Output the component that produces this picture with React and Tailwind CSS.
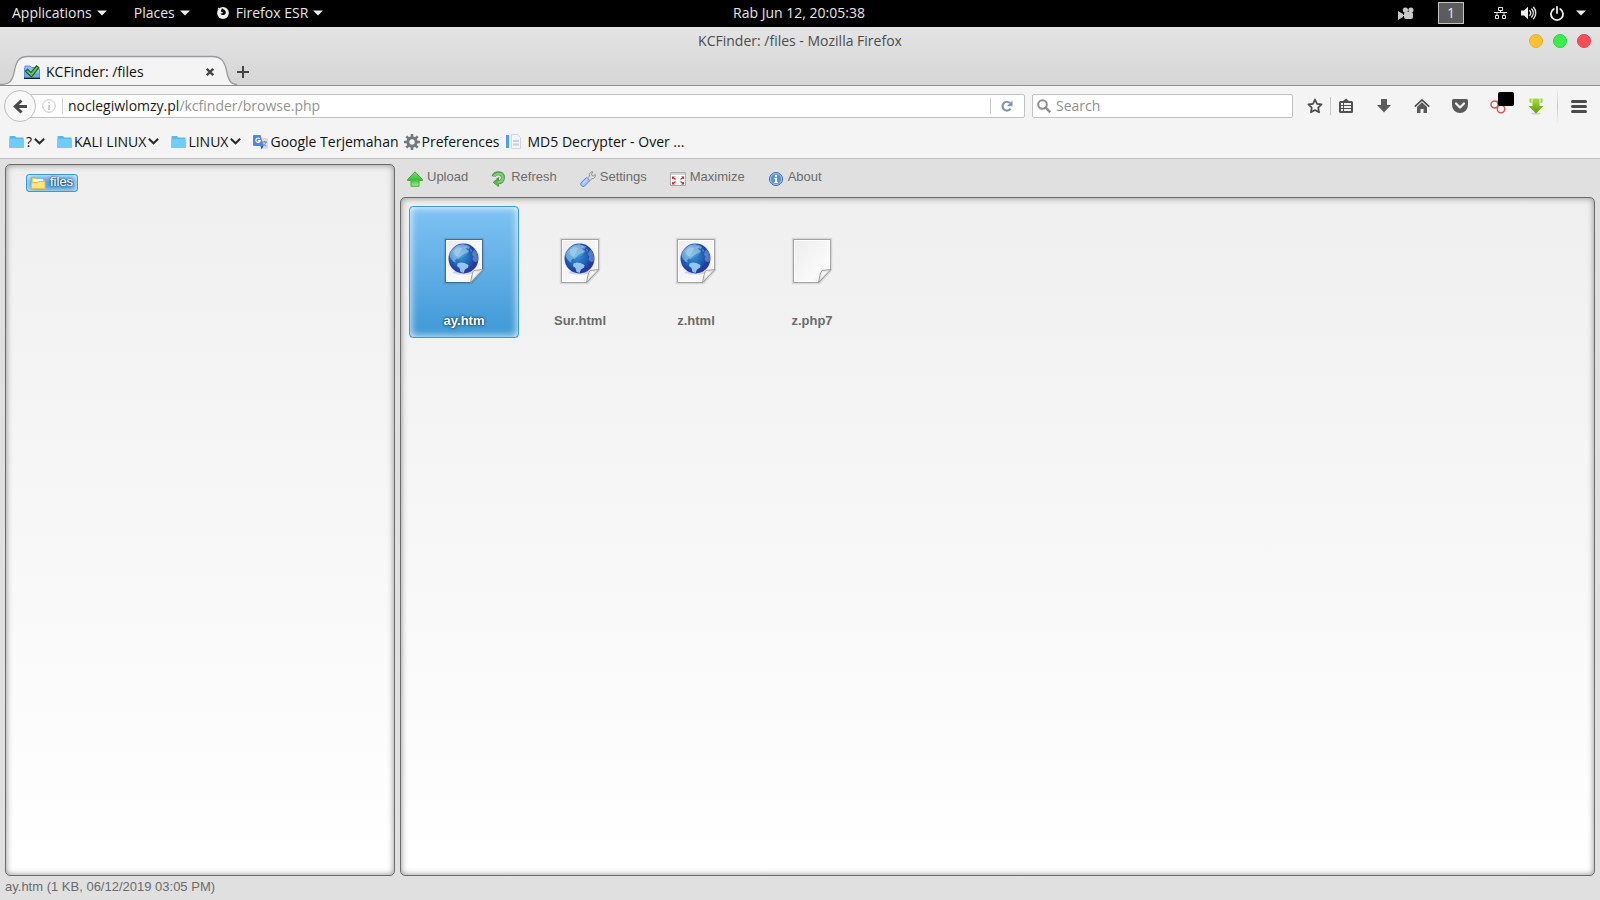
import React from "react";

const UI = "font-['Open_Sans','Noto_Sans',sans-serif]";

function Caret() {
  return (
    <svg width="10" height="6" viewBox="0 0 10 6" className="shrink-0" aria-hidden="true">
      <path d="M0 .5h10L5 5.5z" fill="#eee" />
    </svg>
  );
}

function FirefoxIcon() {
  return (
    <svg width="12" height="12" viewBox="0 0 12 12" aria-hidden="true">
      <circle cx="6" cy="6" r="5.900" fill="#eee" />
      <path d="M5 1.200l2.200 1.500c1.300.8 1.800 2 1.500 3.300-.4 1.700-2 2.400-3.500 2-1-.3-1.600-1-1.700-1.600l1.800.1.900-1-1.900-.6-.3-1.400z" fill="#000" />
      <path d="M.5 2.500L1.300.5l1.500 1.200z" fill="#eee" />
    </svg>
  );
}

function SystemTray() {
  return (
    <div className="flex items-center">
      <button aria-label="Screen recorder" className="flex">
        <svg width="16" height="13" viewBox="0 0 16 13" fill="#c8c8c8">
          <circle cx="7.400" cy="3" r="2.600" />
          <circle cx="12.900" cy="3" r="2.600" />
          <rect x="6" y="5" width="9" height="7" rx="2" />
          <path d="M0 4l5 3v3l-5 3z" />
          <path d="M4 8h3v1H4z" />
        </svg>
      </button>
      <button aria-label="Workspace 1" className="ml-6 flex h-[22px] w-[26px] items-center justify-center border border-[#c4c4c4] bg-[#5c5c5c] text-[14px] leading-none text-[#e6e6e6]">
        1
      </button>
      <button aria-label="Network" className="ml-[30px] flex">
        <svg width="13" height="12" viewBox="0 0 13 12" fill="none" stroke="#e6e6e6">
          <path d="M4.500.5h4v3h-4zM1.500 8.500h3v3h-3zM8.500 8.500h3v3h-3zM6.500 3.500v2M0 5.500h13M3 5.500v3M10 5.500v3" />
        </svg>
      </button>
      <button aria-label="Volume" className="ml-[14px] flex">
        <svg width="16" height="14" viewBox="0 0 16 14">
          <path d="M0 4.500h3L7 .8v12.400L3 9.500H0z" fill="#eee" />
          <g fill="none" stroke="#e6e6e6" strokeWidth="1.400" strokeLinecap="round">
            <path d="M8.800 4.800a3 3 0 0 1 0 4.400M10.700 3a6 6 0 0 1 0 8M12.600 1.200a9 9 0 0 1 0 11.600" />
          </g>
        </svg>
      </button>
      <button aria-label="Power" className="ml-[13px] flex items-center gap-[12px]">
        <svg width="14" height="15" viewBox="0 0 14 15" fill="none" stroke="#eee" strokeWidth="1.800" strokeLinecap="round">
          <path d="M7 1v6M3.800 3a6 6 0 1 0 6.400 0" />
        </svg>
        <Caret />
      </button>
    </div>
  );
}

function SystemBar() {
  return (
    <header className="grid h-[27px] grid-cols-[1fr_auto_1fr] items-center bg-black pr-[14px] pb-px pl-3 text-[14px] leading-[20px] text-[#e6e6e6]">
      <nav className="flex items-center gap-[27px]">
        <button className="flex items-center gap-[5px]">Applications<Caret /></button>
        <button className="flex items-center gap-[5px]">Places<Caret /></button>
        <button className="flex items-center gap-[5px]">
          <FirefoxIcon />
          <span className="pl-[2px]">Firefox ESR</span>
          <Caret />
        </button>
      </nav>
      <time>Rab Jun 12, 20:05:38</time>
      <div className="flex justify-end">
        <SystemTray />
      </div>
    </header>
  );
}

function TitleAndTabs() {
  return (
    <div className="flex h-[59px] flex-col border-b border-[#8f8f8f] bg-linear-to-b from-[#e4e4e4] to-[#d5d5d5]">
      <div className="grid h-[28px] grid-cols-[1fr_auto_1fr] items-center px-[9px]">
        <span />
        <h1 className="text-[14px] leading-[20px] text-[#4c4c4c]">KCFinder: /files - Mozilla Firefox</h1>
        <div className="flex justify-end gap-[10px]">
          <button aria-label="Minimize" className="size-[14px] rounded-full border border-[#e9ae2a] bg-[#fcc133]" />
          <button aria-label="Maximize window" className="size-[14px] rounded-full border border-[#2bd53d] bg-[#39ee4c]" />
          <button aria-label="Close window" className="size-[14px] rounded-full border border-[#e0404a] bg-[#f94d57]" />
        </div>
      </div>
      <div className="flex h-[31px] items-center">
        <div className="relative flex h-[31px] w-[237px] items-center pt-[5px] pr-[23px] pl-[24px]">
          <svg className="absolute inset-0" width="237" height="31" viewBox="0 0 237 31" aria-hidden="true">
            <path d="M0 30.500C10 30.500 12 27 14 19 16 8 18 2.500 28 2.500H212C222 2.500 225 8 227 19 229 27 231 30.500 237 30.500V31H0z" fill="#f4f4f4" />
            <path d="M0 30.500C10 30.500 12 27 14 19 16 8 18 2.500 28 2.500H212C222 2.500 225 8 227 19 229 27 231 30.500 237 30.500" fill="none" stroke="#999b9f" strokeWidth="1.300" />
          </svg>
          <a href="#tab" className="relative flex grow items-center gap-[6px] text-[14px] leading-[20px] text-[#111]">
            <svg width="16" height="14" viewBox="0 0 16 14" aria-hidden="true">
              <path d="M1 1h5l1.500 1.500H14V4h1.500v9H.5V3H1z" fill="#8fc0fa" stroke="#5a8ee0" />
              <path d="M1 8h14v4H1z" fill="#6ea6f0" />
              <path d="M0 12.700h16V14H0z" fill="#0c1a30" />
              <path d="M1.500 6l2-1.700L7 7.500 12.500.8l2.300 1.700L7.500 12 1.500 6.500z" fill="#6cc653" stroke="#1d5a18" strokeWidth="1.100" />
            </svg>
            KCFinder: /files
          </a>
          <button aria-label="Close tab" className="relative flex">
            <svg width="8" height="8" viewBox="0 0 8 8" stroke="#444" strokeWidth="2.300">
              <path d="M.8.8l6.400 6.400M7.200.8L.8 7.200" />
            </svg>
          </button>
        </div>
        <button aria-label="New tab" className="flex pt-[5px]">
          <svg width="12" height="12" viewBox="0 0 12 12" stroke="#444" strokeWidth="2">
            <path d="M6 0v12M0 6h12" />
          </svg>
        </button>
      </div>
    </div>
  );
}

function NavBar() {
  return (
    <div className="flex h-10 items-center pr-[13px] pl-1">
      <button aria-label="Back" className="relative z-10 flex size-8 shrink-0 items-center justify-center rounded-full border border-[#bdbdbd] bg-[#f8f8f8]">
        <svg width="14" height="15" viewBox="0 0 14 15" fill="none" stroke="#4a4a4a" strokeWidth="3">
          <path d="M8.500 1.500L2.300 7.500l6.200 6M2.500 7.500H14" />
        </svg>
      </button>
      <div className="-ml-2 flex h-6 min-w-0 grow items-center rounded-xs border border-[#c2c2c2] bg-white pr-[11px] pl-[13px]">
        <svg width="14" height="14" viewBox="0 0 14 14" className="shrink-0" aria-hidden="true">
          <circle cx="7" cy="7" r="6.300" fill="none" stroke="#c4c4c4" />
          <path d="M6.200 3h1.600v1.600H6.200zM6.200 6h1.600v5H6.200z" fill="#c4c4c4" />
        </svg>
        <span className="mr-[5px] ml-[6px] h-4 w-px shrink-0 bg-[#d0d0d0]" />
        <label htmlFor="address" className="text-[14px] leading-[20px] text-[#1a1a1a]">noclegiwlomzy.pl</label>
        <input id="address" type="text" defaultValue="/kcfinder/browse.php" className="min-w-0 grow bg-transparent text-[14px] leading-[20px] text-[#929292] outline-none" />
        <span className="mr-[10px] h-4 w-px shrink-0 bg-[#c8c8c8]" />
        <button aria-label="Reload" className="flex">
          <svg width="12" height="12" viewBox="0 0 12 12">
            <path d="M9.600 8.600A4.400 4.400 0 1 1 9 3" fill="none" stroke="#8797a8" strokeWidth="2.200" />
            <path d="M11.500.5v5.700H5.800z" fill="#8797a8" />
          </svg>
        </button>
      </div>
      <div className="ml-[7px] flex h-6 w-[261px] shrink-0 items-center gap-[5px] rounded-xs border border-[#c2c2c2] bg-white pl-1">
        <svg width="14" height="14" viewBox="0 0 14 14" fill="none" stroke="#8e8e8e" aria-hidden="true">
          <circle cx="5.500" cy="5.500" r="4.300" strokeWidth="2" />
          <path d="M8.700 8.700l4.500 4.500" strokeWidth="2.600" />
        </svg>
        <input type="search" aria-label="Search" placeholder="Search" className="min-w-0 grow bg-transparent text-[14px] leading-[20px] outline-none placeholder:text-[#8e8e8e]" />
      </div>
      <div className="ml-[14px] flex shrink-0 items-center">
        <button aria-label="Bookmark this page" className="flex">
          <svg width="16" height="16" viewBox="0 0 16 16">
            <path d="M8 1.500l2 4.300 4.600.6-3.400 3.200.9 4.700L8 12l-4.100 2.300.9-4.700L1.400 6.400 6 5.800z" fill="none" stroke="#4a4a4a" strokeWidth="1.700" strokeLinejoin="round" />
          </svg>
        </button>
        <span className="ml-[7px] h-[18px] w-px bg-[#c8c8c8]" />
        <div className="ml-[7px] flex items-center gap-[22px]">
          <button aria-label="Bookmarks list" className="flex">
            <svg width="16" height="16" viewBox="0 0 16 16">
              <path d="M5 3L8 .5 11 3h2.500A1.500 1.500 0 0 1 15 4.500v9a1.500 1.500 0 0 1-1.500 1.500h-11A1.500 1.500 0 0 1 1 13.500v-9A1.500 1.500 0 0 1 2.500 3z" fill="#505050" />
              <path d="M3 5h2v2H3zM6 5h7v2H6zM3 8h2v2H3zM6 8h7v2H6zM3 11h2v2H3zM6 11h7v2H6z" fill="#f4f4f4" />
            </svg>
          </button>
          <button aria-label="Downloads" className="flex">
            <svg width="16" height="16" viewBox="0 0 16 16">
              <path d="M5 1h6v6h4l-7 7.500L1 7h4z" fill="#5c5c5c" />
            </svg>
          </button>
          <button aria-label="Home" className="flex">
            <svg width="16" height="16" viewBox="0 0 16 16">
              <path d="M.8 8.600L8 1.800l7.200 6.800" fill="none" stroke="#505050" strokeWidth="1.700" />
              <path d="M3 9l5-4.700L13 9v6H9.500v-4h-3v4H3z" fill="#5a5a5a" />
            </svg>
          </button>
          <button aria-label="Pocket" className="flex">
            <svg width="16" height="16" viewBox="0 0 16 16">
              <path d="M1.500 1h13a1.500 1.500 0 0 1 1.500 1.500V7A8 8 0 0 1 0 7V2.500A1.500 1.500 0 0 1 1.500 1z" fill="#5a5a5a" />
              <path d="M4 5.500l4 4 4-4" fill="none" stroke="#f4f4f4" strokeWidth="2.200" strokeLinecap="round" strokeLinejoin="round" />
            </svg>
          </button>
          <button aria-label="Extension" className="relative flex">
            <svg width="16" height="16" viewBox="0 0 16 16" fill="#fff" stroke="#d9534f" strokeWidth="1.500">
              <path d="M4 7l5-5" />
              <circle cx="4.500" cy="6.500" r="3.500" />
              <circle cx="11" cy="11" r="3.700" />
            </svg>
            <span className="absolute -top-[6px] left-2 h-[14px] w-4 rounded-xs bg-black" />
          </button>
          <button aria-label="Download helper" className="flex">
            <svg width="16" height="17" viewBox="0 0 16 17">
              <ellipse cx="8" cy="15.500" rx="5" ry="1" fill="#d0d0d0" />
              <path d="M4.500.5h7v7.500h4L8 15.500.5 8h4z" fill="url(#lime)" />
              <path d="M1.500.5h2v5l-2-1.500zM14.500.5h-2v5l2-1.500z" fill="#9ad13b" />
              <defs>
                <linearGradient id="lime" x2="0" y2="1">
                  <stop stopColor="#a6dc42" />
                  <stop offset="1" stopColor="#5d9c0c" />
                </linearGradient>
              </defs>
            </svg>
          </button>
        </div>
        <span className="ml-[13px] h-9 w-px bg-linear-to-b from-transparent via-[#c4c4c4] to-transparent" />
        <button aria-label="Open menu" className="ml-[13px] flex flex-col gap-[2px]">
          <span className="h-[3px] w-4 rounded-full bg-[#4a4a4a]" />
          <span className="h-[3px] w-4 rounded-full bg-[#4a4a4a]" />
          <span className="h-[3px] w-4 rounded-full bg-[#4a4a4a]" />
        </button>
      </div>
    </div>
  );
}

function BlueFolder() {
  return (
    <svg width="15" height="12" viewBox="0 0 15 12" aria-hidden="true">
      <path d="M.5 0H6l1.500 1.500h7V12H.5z" fill="#5db8e8" />
      <path d="M0 3h15v9H0z" fill="#6fcdfb" />
    </svg>
  );
}

function FolderMenu({ name }) {
  return (
    <button className="flex items-center gap-[2px]">
      <BlueFolder />
      <span>{name}</span>
      <svg width="11" height="7" viewBox="0 0 11 7" fill="none" stroke="#2a2a2a" strokeWidth="2" aria-hidden="true">
        <path d="M.8.8l4.700 4.500L10.200.8" />
      </svg>
    </button>
  );
}

function BookmarksBar() {
  return (
    <nav className="flex h-[33px] items-center gap-3 border-b border-[#c0c0c0] px-[9px] pb-px text-[14px] leading-[20px] text-[#111]">
      <FolderMenu name="?" />
      <FolderMenu name="KALI LINUX" />
      <FolderMenu name="LINUX" />
      <div className="flex items-center gap-[5px]">
        <a href="#translate" className="flex items-center gap-[2px]">
          <svg width="15" height="16" viewBox="0 0 15 16" aria-hidden="true">
            <path d="M6 4h8a1 1 0 0 1 1 1v9a1 1 0 0 1-1 1H8z" fill="#d9dbdf" />
            <path d="M9 8h5M11.500 7v1M13 8c-.5 2-2 3.500-3.500 4M10 9.500c.8 1.400 2 2.200 3.500 2.700" stroke="#7a8794" fill="none" />
            <path d="M1 1h6.500l3 11H1a1 1 0 0 1-1-1V2a1 1 0 0 1 1-1z" fill="#4a86f0" />
            <path d="M7.500 12h3l-2 3.500z" fill="#2b4fc0" />
            <path d="M6.800 4.900A2.200 2.200 0 1 0 7.200 6.600H5" fill="none" stroke="#fff" strokeWidth="1.100" />
          </svg>
          Google Terjemahan
        </a>
        <a href="#preferences" className="flex items-center gap-[2px]">
          <svg width="16" height="16" viewBox="0 0 16 16" aria-hidden="true" fill="none" stroke="#75787b">
            <circle cx="8" cy="8" r="4.200" strokeWidth="3" />
            <path d="M8 0v3M8 13v3M0 8h3M13 8h3M2.300 2.300l2.100 2.100M11.600 11.600l2.100 2.100M2.300 13.700l2.100-2.100M11.600 4.400l2.100-2.100" strokeWidth="2.600" />
          </svg>
          Preferences
        </a>
        <a href="#md5" className="flex items-center gap-[6px] pl-[2px]">
          <svg width="15" height="15" viewBox="0 0 15 15" aria-hidden="true">
            <path d="M0 1h3v13H0z" fill="#4ba3dc" />
            <path d="M3 1h1v13H3z" fill="#d5e6f2" />
            <path d="M5.500.5h6l3 3v11h-9z" fill="#f2f4f7" stroke="#cfd5dd" />
            <path d="M7 6h6v2H7zM7 9.500h6v2H7z" fill="#c8d0da" />
          </svg>
          MD5 Decrypter - Over ...
        </a>
      </div>
    </nav>
  );
}

const panel =
  "rounded-[5px] border border-[#6b6b6b] bg-linear-to-b from-[#efefef] to-white shadow-[inset_0_0_6px_#888]";

function UploadIcon() {
  return (
    <svg width="16" height="16" viewBox="0 0 16 16" aria-hidden="true">
      <defs>
        <linearGradient id="leaf" x2="0" y2="1">
          <stop stopColor="#7be25f" />
          <stop offset=".55" stopColor="#3cbf3a" />
          <stop offset="1" stopColor="#a4f08c" />
        </linearGradient>
      </defs>
      <path d="M8 .8l7.500 7.700v1H12v5.800H4V9.500H.5v-1z" fill="url(#leaf)" stroke="#4aa544" />
    </svg>
  );
}

function RefreshIcon() {
  return (
    <svg width="16" height="16" viewBox="0 0 16 16" aria-hidden="true">
      <path d="M2.500 5.500C3.500 1 12 .8 12 6.500c0 3.500-2.500 4.700-4.500 4.800" fill="none" stroke="#4c9a48" strokeWidth="4" />
      <path d="M7.500 7.300v8.200L2.200 11.300z" fill="#5fb654" stroke="#4c9a48" />
      <path d="M3 5.600C4 1.800 11.800 1.500 11.800 6.500c0 3.200-2.600 4.600-4.800 4.800" fill="none" stroke="#86cc7a" strokeWidth="2.200" />
      <path d="M5.500 8.500l2.500-2" stroke="#4c9a48" strokeWidth="1.400" />
    </svg>
  );
}

function SettingsIcon() {
  return (
    <svg width="16" height="16" viewBox="0 0 16 16" aria-hidden="true">
      <path d="M7.500 7l2-2c-.5-2 .5-3.800 2.700-4.300l.8.300-1.500 2 .4 1.500 1.500.4 1.900-1.500c.6 2.200-1 4.500-3.400 4.300l-2.200 2z" fill="#dcdcdc" stroke="#8a8a8a" strokeWidth=".9" />
      <path d="M1.200 11.500l5.300-5 3.200 3.200-5 5.200c-1 .9-2.400.7-3.200-.1s-1.100-2.300-.3-3.300z" fill="#a3c3fa" stroke="#6388cf" />
      <path d="M3 12.500l4.500-4.400" stroke="#d6e5ff" />
    </svg>
  );
}

function MaximizeIcon() {
  return (
    <svg width="16" height="16" viewBox="0 0 16 16" aria-hidden="true">
      <path d="M.5 1.500h15v13H.5z" fill="#fff" stroke="#aaa" />
      <path d="M1 2h14v2H1z" fill="#d4d4d4" />
      <path d="M2 5.500h3L2 8.500zM14 5.500h-3l3 3zM2 13.500v-3l3 3zM14 13.500v-3l-3 3z" fill="#d2232c" />
      <path d="M3 6.500l2.500 2M13 6.500l-2.500 2M3 12.500l2.500-2M13 12.500l-2.500-2" stroke="#d2232c" strokeWidth="1.200" />
    </svg>
  );
}

function AboutIcon() {
  return (
    <svg width="16" height="16" viewBox="0 0 16 16" aria-hidden="true">
      <circle cx="8" cy="8" r="6.500" fill="#5a8fd0" stroke="#3e6aa8" />
      <circle cx="8" cy="8" r="5.500" fill="none" stroke="#a9c8ee" />
      <path d="M7 4h2v1.700H7zM6.300 6.700H9v4h.8V12H6.300v-1.300H7V8h-.7z" fill="#fff" />
    </svg>
  );
}

const tools = [
  ["Upload", UploadIcon],
  ["Refresh", RefreshIcon],
  ["Settings", SettingsIcon],
  ["Maximize", MaximizeIcon],
  ["About", AboutIcon],
];

const files = [
  { name: "ay.htm", web: true, selected: true },
  { name: "Sur.html", web: true },
  { name: "z.html", web: true },
  { name: "z.php7" },
];

function FileIcon({ web, selected }) {
  return (
    <svg width="48" height="48" viewBox="0 0 48 48" aria-hidden="true">
      <defs>
        <linearGradient id="paper" x2="1" y2="1">
          <stop stopColor="#ebeceb" />
          <stop offset=".7" stopColor="#fafafa" />
          <stop offset="1" stopColor="#e4e4e4" />
        </linearGradient>
        <radialGradient id="sea" cx=".42" cy=".42" r=".6">
          <stop stopColor="#3a96d4" />
          <stop offset=".55" stopColor="#1f62b4" />
          <stop offset=".85" stopColor="#223a9e" />
          <stop offset="1" stopColor="#3434a0" />
        </radialGradient>
        <linearGradient id="curl" x2="1" y2="1">
          <stop stopColor="#fff" />
          <stop offset=".5" stopColor="#dedede" />
          <stop offset="1" stopColor="#aaa" />
        </linearGradient>
        <clipPath id="disc">
          <circle cx="23.500" cy="21.500" r="14.500" />
        </clipPath>
      </defs>
      <path d="M5 2h38v31L31.500 46H5z" fill="none" stroke="#000" strokeOpacity=".1" strokeWidth="2.500" />
      <path d="M5.500 2.500h37v30L31 45.500H5.500z" fill="url(#paper)" stroke={selected ? "#3f6e90" : "#a3a3a3"} />
      <path d="M6.500 3.500h35v29L30.500 44.500h-24z" fill="none" stroke="#fff" />
      {web && (
        <g>
          <ellipse cx="23.500" cy="35.500" rx="11" ry="2" fill="#8ab4dc" opacity=".45" />
          <circle cx="23.500" cy="21.500" r="15" fill="url(#sea)" />
          <g clipPath="url(#disc)" fill="#a9d8f4">
            <path d="M12 13c3-4 7-6 11-6l3 1 2 2-2 1 1 2 2 1-2 2-3 1-3 2-2 3-2-.500-2 2 1 2-2-.500-3-3-1.500-3-1.500-3z" opacity=".55" />
            <path d="M14 13l4-3 4 1-1 3-2 3-1 3-2-1-2-3z" opacity=".5" />
            <path d="M17.500 26.500l3-1 4 .500 4 2-.500 2.500-3 2-1.500 3.500-3-1-1-4-2.500-2z" opacity=".85" />
            <path d="M33 14l2-1.500 3 4v8l-3 .500-2.500-2.500 1-3-1.500-2z" opacity=".38" />
            <path d="M26 8l4 1.500-1 2.500-2.500-1zM30 12l2 1-1 2z" opacity=".5" />
          </g>
          <ellipse cx="20" cy="14" rx="9" ry="6" fill="#fff" opacity=".12" />
        </g>
      )}
      <path d="M30.500 45.500l2-9.500 1.500-2.500 9-1z" fill="url(#curl)" stroke="#999" strokeWidth=".9" />
      <path d="M33 41l1.500-5 4.500-1.200z" fill="#fff" />
    </svg>
  );
}

function FileCell({ file }) {
  const box = file.selected
    ? "border-[#3b98d6] bg-linear-to-b from-[#7fc3f4] to-[#3d98d6] text-white shadow-[inset_0_0_8px_#fff] text-shadow-[0_0_3px_#000]"
    : "border-transparent text-[#6b6b6b]";
  return (
    <button aria-pressed={Boolean(file.selected)} className={"flex h-[132px] w-[110px] flex-col items-center rounded-[4px] border pt-[30px] " + box}>
      <FileIcon web={file.web} selected={file.selected} />
      <span className="mt-[28px] text-[13px] leading-[16px] font-bold">{file.name}</span>
    </button>
  );
}

function Finder() {
  return (
    <div className="flex grow flex-col bg-[#e0e0e0] px-[5px] font-['Liberation_Sans',Arial,sans-serif] text-[13px] leading-[16px] text-[#6b6b6b]">
      <div className="flex grow gap-[5px]">
        <aside className={"mt-[5px] w-[390px] shrink-0 pt-[9px] pl-5 " + panel}>
          <button className="flex h-[18px] items-center gap-1 rounded-[3px] border border-[#3b98d6] bg-linear-to-b from-[#6bb5ea] to-[#3d98d6] pr-1 pl-1 text-white shadow-[inset_0_0_7px_#fff] text-shadow-[0_0_3px_#000]">
            <svg width="15" height="14" viewBox="0 0 15 14" aria-hidden="true">
              <path d="M.5 1.500h5l1 2h7v9H.5z" fill="#f3cf5c" stroke="#d9a93a" />
              <path d="M2 3h10v4H2z" fill="#fff8d8" />
              <path d="M.5 6.500h6l1.500-1h6v7H.5z" fill="#fbe38c" stroke="#e5bd50" />
            </svg>
            <span className="pb-[2px]">files</span>
          </button>
        </aside>
        <main className="flex min-w-0 grow flex-col">
          <div className="flex h-[38px] items-center gap-[23px] pl-[7px]">
            {tools.map(([name, Icon]) => (
              <button key={name} className="flex items-start gap-1">
                <span className="pt-[2px]"><Icon /></span>
                <span>{name}</span>
              </button>
            ))}
          </div>
          <section aria-label="Files" className={"flex grow flex-wrap content-start gap-[6px] p-2 " + panel}>
            {files.map((file) => (
              <FileCell key={file.name} file={file} />
            ))}
          </section>
        </main>
      </div>
      <footer className="h-6 pt-[3px]">ay.htm (1 KB, 06/12/2019 03:05 PM)</footer>
    </div>
  );
}

export default function App() {
  return (
    <div className={"flex min-h-screen flex-col bg-[#f4f4f4] " + UI}>
      <SystemBar />
      <TitleAndTabs />
      <NavBar />
      <BookmarksBar />
      <Finder />
    </div>
  );
}
